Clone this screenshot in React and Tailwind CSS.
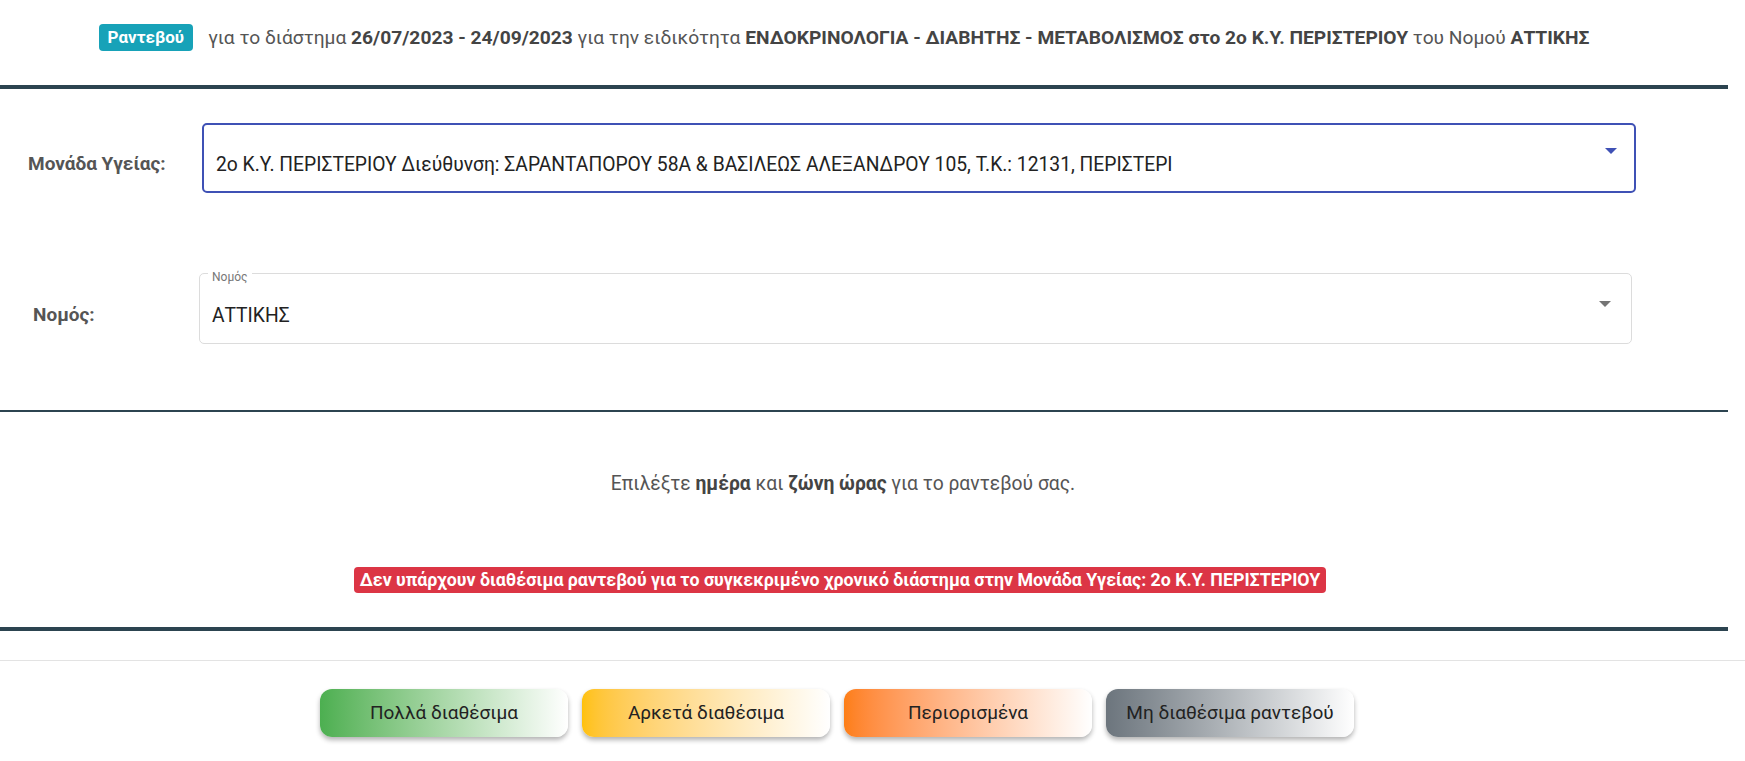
import React from "react";

function Arrow({ color }) {
  return (
    <svg width="12" height="6" viewBox="0 0 12 6" className="shrink-0">
      <path d="M0 0 L12 0 L6 6 Z" fill={color} />
    </svg>
  );
}

const buttons = [
  { label: "Πολλά διαθέσιμα", cls: "bg-gradient-to-r from-[#4caf50] to-white" },
  { label: "Αρκετά διαθέσιμα", cls: "bg-gradient-to-r from-[#ffc107] to-white" },
  { label: "Περιορισμένα", cls: "bg-gradient-to-r from-[#fd7e14] to-white" },
  { label: "Μη διαθέσιμα ραντεβού", cls: "bg-gradient-to-r from-[#6c757d] to-white" },
];

export default function App() {
  return (
    <div className="w-[1745px] h-[761px] bg-white font-['Roboto',sans-serif] overflow-hidden">
      <div className="w-[1728px]">
        {/* header */}
        <div className="h-[85px] pt-[24px] pr-[40px] flex justify-center items-start">
          <span className="h-[27px] px-[9px] rounded-[4px] bg-[#17a2b8] text-white font-bold text-[17px] leading-[27px]">
            Ραντεβού
          </span>
          <span className="ml-[15px] text-[19.2px] leading-[27px] text-[#555]">
            για το διάστημα <b className="text-[#444]">26/07/2023 - 24/09/2023</b> για την ειδικότητα{" "}
            <b className="text-[#444]">ΕΝΔΟΚΡΙΝΟΛΟΓΙΑ - ΔΙΑΒΗΤΗΣ - ΜΕΤΑΒΟΛΙΣΜΟΣ στο 2ο Κ.Υ. ΠΕΡΙΣΤΕΡΙΟΥ</b> του Νομού{" "}
            <b className="text-[#444]">ΑΤΤΙΚΗΣ</b>
          </span>
        </div>
        <div className="h-[4px] bg-[#2c4450]" />

        {/* form */}
        <div className="pt-[34px] h-[321px]">
          <div className="flex">
            <div className="w-[202px] pl-[28px] pt-[29px] text-[19px] font-bold text-[#555] leading-[24px]">
              Μονάδα Υγείας:
            </div>
            <div className="w-[1434px] h-[70px] border-2 border-[#3f51b5] rounded-[5px] flex items-center pl-[12px] pr-[17px] pt-[14px] pb-0">
              <div className="flex-1 text-[19.3px] text-[#222] leading-[22px]">
                2ο Κ.Υ. ΠΕΡΙΣΤΕΡΙΟΥ Διεύθυνση: ΣΑΡΑΝΤΑΠΟΡΟΥ 58Α &amp; ΒΑΣΙΛΕΩΣ ΑΛΕΞΑΝΔΡΟΥ 105, Τ.Κ.: 12131, ΠΕΡΙΣΤΕΡΙ
              </div>
              <div className="-mt-[28px]">
                <Arrow color="#3f51b5" />
              </div>
            </div>
          </div>

          <div className="flex mt-[80px]">
            <div className="w-[199px] pl-[33px] pt-[30px] text-[19px] font-bold text-[#555] leading-[24px]">
              Νομός:
            </div>
            <div className="relative w-[1433px] h-[71px] border border-[#dcdcdc] rounded-[5px] flex items-center pl-[12px] pr-[20px] pt-[14px]">
              <span className="absolute -top-[4px] left-[8px] px-[4px] bg-white text-[12px] leading-[14px] text-[#777]">
                Νομός
              </span>
              <div className="flex-1 text-[19.3px] text-[#222] leading-[22px]">ΑΤΤΙΚΗΣ</div>
              <div className="-mt-[24px]">
                <Arrow color="#757575" />
              </div>
            </div>
          </div>
        </div>
        <div className="h-[2px] bg-[#2c4450]" />

        {/* middle */}
        <div className="h-[215px] pr-[42px] flex flex-col items-center">
          <div className="mt-[60px] text-[19.3px] leading-[24px] text-[#555]">
            Επιλέξτε <b className="text-[#444]">ημέρα</b> και <b className="text-[#444]">ζώνη ώρας</b> για το ραντεβού σας.
          </div>
          <div className="mt-[71px] h-[26px] px-[6px] rounded-[4px] bg-[#dc3545] text-white font-bold text-[17.8px] leading-[26px] -ml-[6px]">
            Δεν υπάρχουν διαθέσιμα ραντεβού για το συγκεκριμένο χρονικό διάστημα στην Μονάδα Υγείας: 2ο Κ.Υ. ΠΕΡΙΣΤΕΡΙΟΥ
          </div>
        </div>
        <div className="h-[4px] bg-[#2c4450]" />
      </div>

      <div className="h-[29px]" />
      <div className="h-[1px] bg-[#e3e3e3]" />

      <div className="w-[1728px] pr-[54px] pt-[28px] flex justify-center gap-[14px]">
        {buttons.map((b) => (
          <div
            key={b.label}
            className={`w-[248px] h-[48px] rounded-[12px] flex items-center justify-center text-[19px] text-[#222] shadow-[0_3px_5px_rgba(0,0,0,0.3)] ${b.cls}`}
          >
            {b.label}
          </div>
        ))}
      </div>
    </div>
  );
}
